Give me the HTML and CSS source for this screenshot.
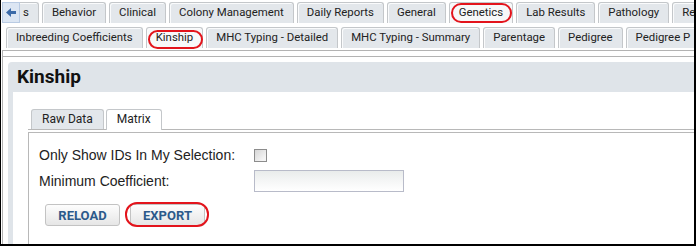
FILE: index.html
```html
<!DOCTYPE html>
<html lang="en">
<head>
  <meta charset="UTF-8">
  <title>Kinship</title>
  <link rel="stylesheet" href="styles.css">
</head>
<body>
  <div class="frame">
    <!-- Top category tabs -->
    <div class="tab-row tab-row-main">
      <span class="scroll-left">
        <svg width="16" height="19" viewBox="0 0 16 19">
          <path d="M3 9.5 L8 5 L8 14 Z" fill="#3b6aa8"/>
          <rect x="7.5" y="8" width="5.5" height="3" fill="#3b6aa8"/>
        </svg>
      </span>
      <span class="tab">s</span>
      <span class="tab">Behavior</span>
      <span class="tab">Clinical</span>
      <span class="tab">Colony Management</span>
      <span class="tab">Daily Reports</span>
      <span class="tab">General</span>
      <span class="tab active mark mark-genetics">Genetics</span>
      <span class="tab">Lab Results</span>
      <span class="tab">Pathology</span>
      <span class="tab">Re</span>
    </div>

    <!-- Genetics sub tabs -->
    <div class="tab-row tab-row-sub">
      <span class="tab">Inbreeding Coefficients</span>
      <span class="tab active mark mark-kinship">Kinship</span>
      <span class="tab">MHC Typing - Detailed</span>
      <span class="tab">MHC Typing - Summary</span>
      <span class="tab">Parentage</span>
      <span class="tab">Pedigree</span>
      <span class="tab">Pedigree P</span>
    </div>
    <div class="strip-spacer"></div>

    <div class="tab-body">
      <div class="panel">
        <div class="panel-header">Kinship</div>
        <div class="panel-body">
          <div class="inner-tabs">
            <span class="itab">Raw Data</span>
            <span class="itab active">Matrix</span>
          </div>
          <div class="inner-body">
            <div class="form-grid">
              <label class="form-label">Only Show IDs In My Selection:</label>
              <div class="form-field"><span class="checkbox"></span></div>
              <label class="form-label">Minimum Coefficient:</label>
              <div class="form-field"><span class="text-input"></span></div>
            </div>
            <div class="button-row">
              <button class="btn">RELOAD</button>
              <button class="btn mark mark-export">EXPORT</button>
            </div>
          </div>
        </div>
      </div>
    </div>
  </div>
</body>
</html>
```

FILE: styles.css
```css
/* Reset */
*, *::before, *::after {
  margin: 0;
  padding: 0;
  box-sizing: border-box;
}
body {
  width: 696px;
  height: 246px;
  overflow: hidden;
  background: #fff;
  color: #222;
  font-family: Roboto, "Liberation Sans", sans-serif;
}
.frame {
  width: 696px;
  height: 246px;
  overflow: hidden;
  border: solid #000;
  border-width: 0 2px 2px 1px;
}
/* Tab rows */
.tab-row {
  display: flex;
  height: 21px;
  white-space: nowrap;
}
.tab-row-main {
  position: relative;
  margin-top: 2px;
  padding-left: 12px;
}
.tab-row-sub {
  margin-top: 4px;
  padding-left: 5px;
}
.tab {
  flex: none;
  height: 21px;
  padding: 0 9px;
  margin-right: 3px;
  border: 1px solid #c4c7ca;
  border-bottom: 0;
  border-radius: 3px 3px 0 0;
  background: #e3e7eb;
  box-shadow: inset 1px 1px 0 #fafbfc;
  font-size: 11.4px;
  line-height: 19px;
  color: #222;
}
.tab.active {
  background: #f7f8f9;
}
.scroll-left {
  position: absolute;
  left: 1px;
  top: 0;
  z-index: 2;
  width: 18px;
  height: 21px;
  display: flex;
  align-items: center;
  justify-content: center;
  background: #dce6f3;
  border: 1px solid #b9cbe3;
}
/* Red annotation ovals */
.mark {
  position: relative;
}
.mark::after {
  content: "";
  position: absolute;
  border: 2px solid #e3141c;
  border-radius: 12px;
}
.mark-genetics::after {
  top: 0;
  left: 1px;
  right: 0;
  bottom: 0;
}
.mark-kinship::after {
  top: 2px;
  left: 1px;
  right: -1px;
  bottom: -1px;
}
.mark-export::after {
  top: -3px;
  left: -6px;
  right: -5px;
  bottom: -2px;
}
/* Tab body */
.strip-spacer {
  height: 7px;
  margin: 2px 0 0 1px;
  border: solid #b3b3b3;
  border-width: 1px 0 1px 1px;
}
.tab-body {
  height: 200px;
  margin-left: 1px;
  padding: 5px 0 0 5px;
  border-left: 1px solid #b3b3b3;
}
/* Panel */
.panel-header {
  height: 30px;
  padding-left: 9px;
  background: #dfe4e9;
  border-radius: 4px 0 0 0;
  font-size: 19px;
  font-weight: 700;
  line-height: 30px;
  color: #111;
}
.panel-body {
  height: 200px;
  padding: 17px 0 0 15px;
  border-left: 5px solid #dfe4e9;
}
.inner-tabs {
  display: flex;
  gap: 2px;
  padding-left: 3px;
  border-bottom: 1px solid #b8b8b8;
}
.itab {
  height: 20px;
  padding: 0 10px;
  border: 1px solid #c4c7ca;
  border-bottom: 0;
  border-radius: 3px 3px 0 0;
  background: #e3e7eb;
  font-size: 12px;
  line-height: 19px;
}
.itab.active {
  background: #fff;
  margin-bottom: -1px;
  height: 21px;
}
.inner-body {
  height: 120px;
  margin-top: 2px;
  padding: 9px 0 0 10px;
  border: solid #b8b8b8;
  border-width: 1px 0 0 1px;
}
/* Form */
.form-grid {
  display: grid;
  grid-template-columns: 215px auto;
  grid-auto-rows: 26px;
  align-items: center;
}
.form-label {
  font-family: "Liberation Sans", Arial, sans-serif;
  font-size: 14px;
  color: #222;
}
.form-field {
  display: flex;
  align-items: center;
}
.checkbox {
  width: 13px;
  height: 13px;
  border: 1px solid #8c8c8c;
  background: linear-gradient(135deg, #d6d6d6, #f4f4f4 80%);
}
.text-input {
  width: 150px;
  height: 22px;
  border: 1px solid #b8bbc9;
  background: linear-gradient(#e9eceb, #f6f7f7 55%, #fff);
}
.button-row {
  display: flex;
  gap: 10px;
  margin: 10px 0 0 6px;
}
.btn {
  width: 75px;
  height: 22px;
  padding: 0;
  border: 1px solid #c3c3c3;
  border-radius: 3px;
  background: linear-gradient(#fdfdfd, #e6e6e6);
  font-family: Roboto, sans-serif;
  font-size: 13px;
  font-weight: 700;
  color: #2c5a8b;
}
```
